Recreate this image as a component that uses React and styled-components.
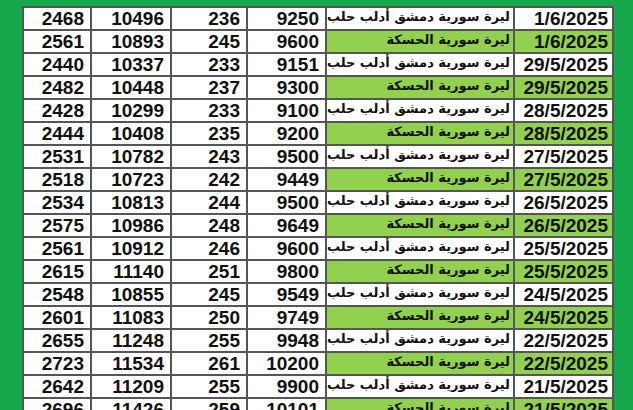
import React from "react";
import styled, { createGlobalStyle } from "styled-components";

const GlobalStyle = createGlobalStyle`
  html, body {
    margin: 0;
    padding: 0;
    background: #14a84b;
    overflow: hidden;
  }
`;

const rows = [
  ["2468", "10496", "236", "9250", "damascus", "1/6/2025"],
  ["2561", "10893", "245", "9600", "hasaka", "1/6/2025"],
  ["2440", "10337", "233", "9151", "damascus", "29/5/2025"],
  ["2482", "10448", "237", "9300", "hasaka", "29/5/2025"],
  ["2428", "10299", "233", "9100", "damascus", "28/5/2025"],
  ["2444", "10408", "235", "9200", "hasaka", "28/5/2025"],
  ["2531", "10782", "243", "9500", "damascus", "27/5/2025"],
  ["2518", "10723", "242", "9449", "hasaka", "27/5/2025"],
  ["2534", "10813", "244", "9500", "damascus", "26/5/2025"],
  ["2575", "10986", "248", "9649", "hasaka", "26/5/2025"],
  ["2561", "10912", "246", "9600", "damascus", "25/5/2025"],
  ["2615", "11140", "251", "9800", "hasaka", "25/5/2025"],
  ["2548", "10855", "245", "9549", "damascus", "24/5/2025"],
  ["2601", "11083", "250", "9749", "hasaka", "24/5/2025"],
  ["2655", "11248", "255", "9948", "damascus", "22/5/2025"],
  ["2723", "11534", "261", "10200", "hasaka", "22/5/2025"],
  ["2642", "11209", "255", "9900", "damascus", "21/5/2025"],
  ["2696", "11426", "259", "10101", "hasaka", "21/5/2025"],
];

const labels = {
  damascus: "ليرة سورية دمشق أدلب حلب",
  hasaka: "ليرة سورية الحسكة",
};

const widths = [68, 80, 76, 79, 188, 99];

export default function App() {
  return (
    <Page>
      <GlobalStyle />
      <Table>
        <colgroup>
          {widths.map((w, i) => (
            <col key={i} style={{ width: w }} />
          ))}
        </colgroup>
        <tbody>
          {rows.map((r, i) => {
            const green = r[4] === "hasaka";
            return (
              <Row key={i}>
                <Num>{r[0]}</Num>
                <Num>{r[1]}</Num>
                <Num>{r[2]}</Num>
                <Num>{r[3]}</Num>
                <Label dir="rtl" $green={green}>
                  {labels[r[4]]}
                </Label>
                <DateCell $green={green}>{r[5]}</DateCell>
              </Row>
            );
          })}
        </tbody>
      </Table>
    </Page>
  );
}

const Page = styled.div`
  height: 410px;
  padding: 6px 0 0 22px;
  box-sizing: border-box;
  overflow: hidden;
`;

const Table = styled.table`
  border-collapse: collapse;
  table-layout: fixed;
  width: 592px;
  border-top: 2px solid #4a4a4a;
  border-right: 2px solid #3a5a3a;
`;

const Row = styled.tr`
  height: 23px;
`;

const Cell = styled.td`
  border: 2px solid #555;
  padding: 0 5px;
  height: 21px;
  line-height: 21px;
  white-space: nowrap;
  overflow: hidden;
  text-align: right;
  color: #111;
  font-weight: bold;
  background: ${({ $green }) => ($green ? "#92d050" : "#ffffff")};
`;

const Num = styled(Cell)`
  font-family: "Liberation Sans", Arial, sans-serif;
  font-size: 19px;
  padding-right: 6px;
`;

const Label = styled(Cell)`
  font-family: "DejaVu Sans", "Noto Sans", sans-serif;
  font-size: 13px;
  line-height: 18px;
  vertical-align: top;
  padding: 0 3px;
`;

const DateCell = styled(Cell)`
  font-family: "Liberation Sans", Arial, sans-serif;
  font-size: 19px;
  padding-right: 4px;
`;
